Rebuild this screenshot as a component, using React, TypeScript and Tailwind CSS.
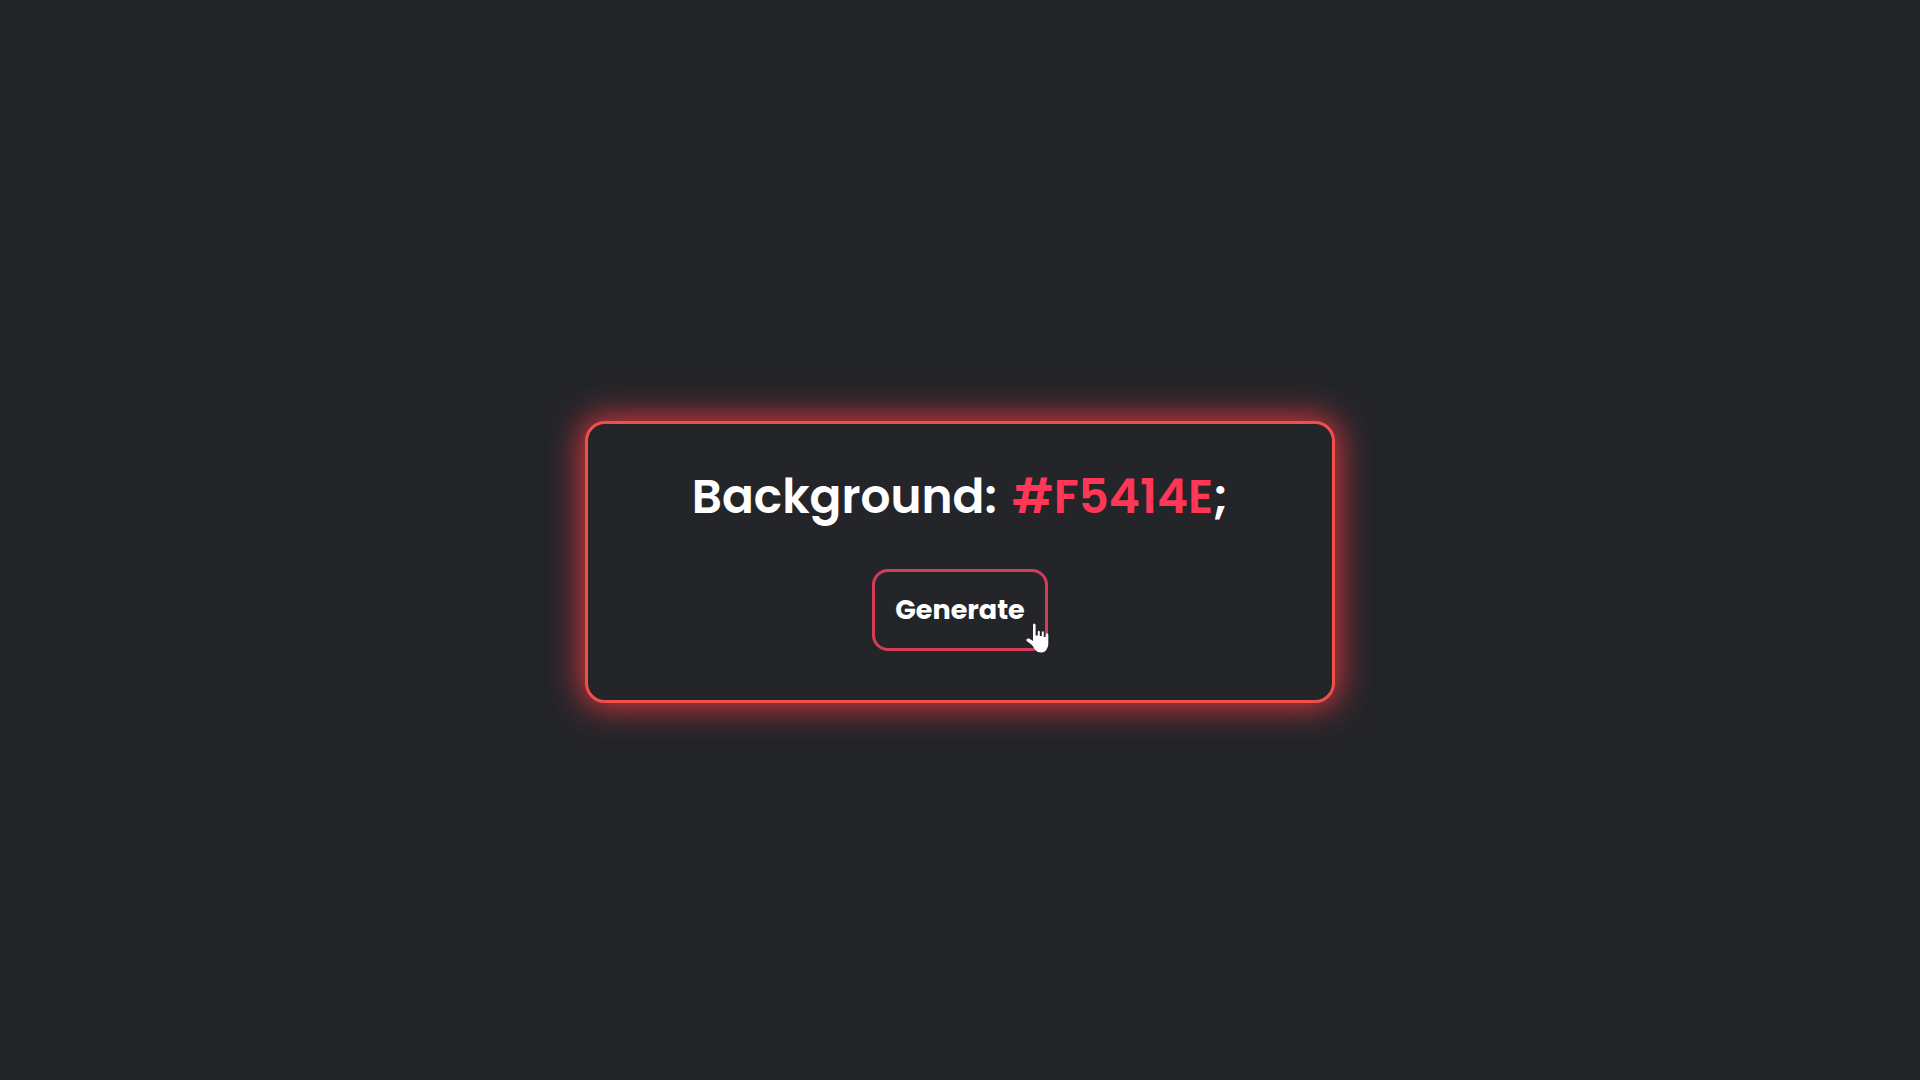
import { useState } from 'react';

function HandPointer() {
  return (
    <svg
      viewBox="0 0 23 30"
      className="absolute -right-1 -bottom-[5px] w-[23px] h-[30px] pointer-events-none"
      fill="#ffffff"
      aria-hidden="true"
    >
      <path d="M7 2Q7 .5 8.300 .5Q9.600 .5 9.600 2V12.500H11.800V9Q11.800 7.800 12.800 7.800Q13.800 7.800 13.800 9V13H15.800V9.500Q15.800 8.300 16.800 8.300Q17.800 8.300 17.800 9.500V14H19.800V12Q19.900 10.300 21.100 10.300Q22.300 10.300 22.300 12V20.500Q22.300 23 21.300 25Q19.500 29.500 15 29.500Q11 29.500 9 26.500L6 22L1 18.300Q0 17.300 .6 16.300Q1.500 15 3.500 15.700L7 18Z" />
    </svg>
  );
}

export default function App() {
  const [color, setColor] = useState('#F5414E');

  const generateColor = () => {
    const value = Math.floor(Math.random() * 0x1000000);
    setColor('#' + value.toString(16).padStart(6, '0').toUpperCase());
  };

  return (
    <main className="min-h-screen flex items-center justify-center px-4 pt-11 bg-[#232529] font-['Poppins','Inter',sans-serif]">
      <section className="w-full max-w-[750px] flex flex-col items-center gap-9 pt-[37px] pb-[49px] px-6 border-3 border-[#f0504a] rounded-[20px] bg-[#232529] shadow-[0_0_32px_4px_#d9363f]">
        <h1 className="text-[47px] leading-[72px] font-semibold text-white text-center">
          Background: <span className="ml-1 text-[#ff3656]">{color}</span>;
        </h1>

        <button
          type="button"
          onClick={generateColor}
          className="relative px-5 py-5 border-3 border-[#d43d59] rounded-2xl text-[27px] leading-9 font-bold text-white cursor-pointer"
        >
          Generate
          <HandPointer />
        </button>
      </section>
    </main>
  );
}
